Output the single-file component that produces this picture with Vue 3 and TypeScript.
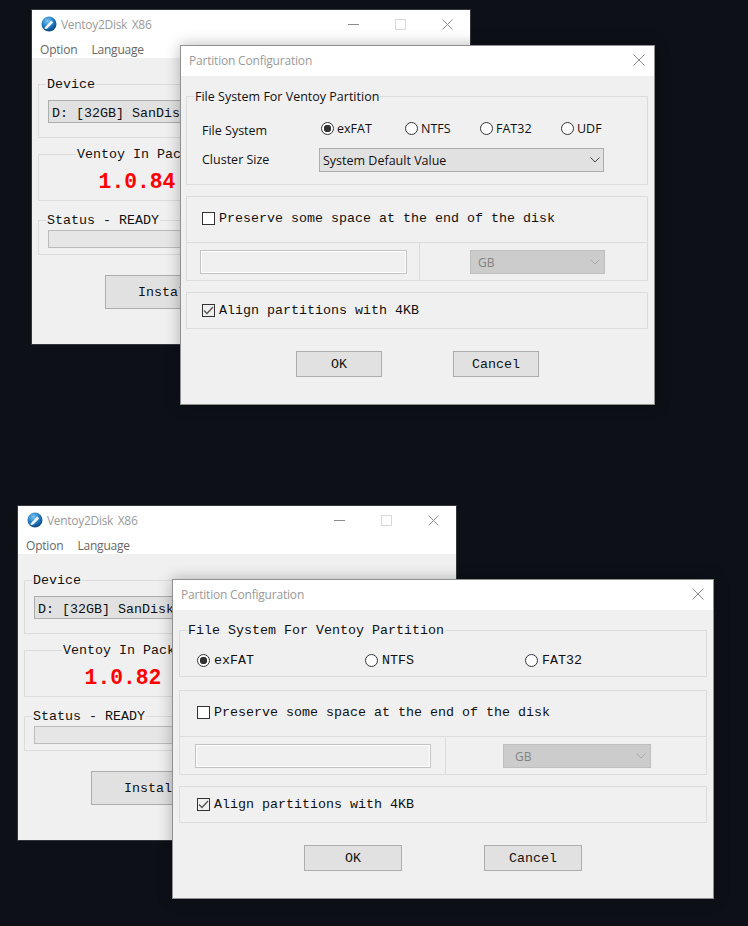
<script setup lang="ts">
interface Pair {
  id: string
  version: string
  device: string
}
const pairs: Pair[] = [
  { id: 'a', version: '1.0.84', device: 'D: [32GB] SanDisk' },
  { id: 'b', version: '1.0.82', device: 'D: [32GB] SanDisk' },
]
const radiosA = [
  { label: 'exFAT', on: true },
  { label: 'NTFS', on: false },
  { label: 'FAT32', on: false },
  { label: 'UDF', on: false },
]
const radiosB = radiosA.slice(0, 3)
</script>

<template>
  <div class="desktop">
    <template v-for="p in pairs" :key="p.id">
      <section class="win main" :class="p.id">
        <header class="titlebar">
          <svg class="logo" width="16" height="16" viewBox="0 0 16 16">
            <defs>
              <radialGradient :id="'g' + p.id" cx="40%" cy="30%" r="75%">
                <stop offset="0" stop-color="#7fc4ee" />
                <stop offset="0.55" stop-color="#1f7cc4" />
                <stop offset="1" stop-color="#0c3f78" />
              </radialGradient>
            </defs>
            <circle cx="8" cy="8" r="7.5" :fill="'url(#g' + p.id + ')'" />
            <path d="M4 11.2 10.2 4.6l2 1.8-6.2 6.4-2.4.2z" fill="#f4f7fa" />
          </svg>
          <span class="title main-title">Ventoy2Disk&nbsp; X86</span>
          <div class="controls">
            <svg width="11" height="11" viewBox="0 0 11 11"><path d="M0 5.5h11" stroke="#8c8c8c" /></svg>
            <svg width="11" height="11" viewBox="0 0 11 11"><rect x=".5" y=".5" width="10" height="10" fill="none" stroke="#d8d8d8" /></svg>
            <svg width="11" height="11" viewBox="0 0 11 11"><path d="M.5.5l10 10M10.5.5l-10 10" stroke="#8c8c8c" /></svg>
          </div>
        </header>
        <nav class="menu"><span>Option</span><span>Language</span></nav>
        <div class="body">
          <fieldset class="box device">
            <legend>Device</legend>
            <div class="combo">{{ p.device }}</div>
          </fieldset>
          <fieldset class="box pack">
            <legend>Ventoy In Pack</legend>
            <div class="version">{{ p.version }}</div>
          </fieldset>
          <fieldset class="box status">
            <legend>Status - READY</legend>
            <div class="progress"></div>
          </fieldset>
          <button class="btn install" type="button">Install</button>
        </div>
      </section>

      <section class="win dialog" :class="p.id">
        <header class="dlg-title">
          <span class="title">Partition Configuration</span>
          <svg width="12" height="12" viewBox="0 0 12 12"><path d="M.5.5l11 11M11.5.5l-11 11" stroke="#8a8a8a" /></svg>
        </header>
        <div class="dlg-body">
          <fieldset v-if="p.id === 'a'" class="box fs fs-a">
            <legend>File System For Ventoy Partition</legend>
            <div class="fs-grid">
              <span class="lbl lbl-fs">File System</span>
              <div class="radios">
                <label v-for="r in radiosA" :key="r.label" class="radio">
                  <i class="dot" :class="{ on: r.on }"></i>{{ r.label }}
                </label>
              </div>
              <span class="lbl">Cluster Size</span>
              <div class="select">
                <span>System Default Value</span>
                <svg width="10" height="6" viewBox="0 0 10 6"><path d="M.5.5 5 5 9.5.5" fill="none" stroke="#444" /></svg>
              </div>
            </div>
          </fieldset>
          <fieldset v-else class="box fs fs-b">
            <legend>File System For Ventoy Partition</legend>
            <div class="radios">
              <label v-for="r in radiosB" :key="r.label" class="radio">
                <i class="dot" :class="{ on: r.on }"></i>{{ r.label }}
              </label>
            </div>
          </fieldset>

          <div class="box reserve">
            <label class="check-row">
              <i class="check"></i>Preserve some space at the end of the disk
            </label>
            <div class="size-row">
              <div class="cell-input"><div class="input"></div></div>
              <div class="cell-unit">
                <div class="select off">
                  <span>GB</span>
                  <svg width="10" height="6" viewBox="0 0 10 6"><path d="M.5.5 5 5 9.5.5" fill="none" stroke="#a9a9a9" /></svg>
                </div>
              </div>
            </div>
          </div>

          <div class="box align">
            <label class="check-row">
              <i class="check checked">
                <svg width="11" height="11" viewBox="0 0 11 11"><path d="M1 5.5 4 8.5 10 2" fill="none" stroke="#555" stroke-width="1.3" /></svg>
              </i>Align partitions with 4KB
            </label>
          </div>

          <div class="actions">
            <button class="btn" type="button">OK</button>
            <button class="btn" type="button">Cancel</button>
          </div>
        </div>
      </section>
    </template>
  </div>
</template>

<style>
html, body { margin: 0; background: #0d1017; }
</style>

<style scoped>
* { box-sizing: border-box; }
.desktop {
  position: relative;
  width: 748px;
  height: 926px;
  overflow: hidden;
  background: #0d1017;
  font-family: "Liberation Mono", monospace;
  font-size: 13.33px;
  color: #111;
}
.win { position: absolute; background: #f0f0f0; }

/* main window */
.main { width: 440px; height: 336px; border: 1px solid #33363b; display: flex; flex-direction: column; }
.main.a { left: 31px; top: 9px; }
.main.b { left: 17px; top: 505px; }
.title { font-family: "Open Sans", sans-serif; font-size: 12px; color: #9a9a9a; letter-spacing: -.2px; }
.main-title { letter-spacing: -.3px; word-spacing: -.5px; }
.titlebar { height: 28px; background: #fff; display: flex; align-items: center; padding-left: 9px; }
.logo { margin-right: 4px; flex: none; }
.controls { margin-left: auto; display: flex; gap: 36px; padding-right: 17px; }
.menu {
  height: 20px;
  background: #fff;
  display: flex;
  gap: 14px;
  padding: 3px 0 0 8px;
  align-items: center;
  font-family: "Open Sans", sans-serif;
  font-size: 12px;
  letter-spacing: -.2px;
  color: #666;
}
.body { flex: 1; padding: 18px 6px 0; display: flex; flex-direction: column; }

.box { border: 1px solid #dcdcdc; margin: 0; padding: 0; min-width: 0; }
legend { padding: 0 1px; height: 16px; line-height: 18px; }

.device { padding: 8px 9px 14px; }
.device legend, .status legend { margin-left: -2px; }
.combo {
  height: 23px;
  line-height: 23px;
  padding: 1px 0 0 3px;
  background: #e1e1e1;
  border: 1px solid #adadad;
}
.pack { margin-top: 8px; width: 198px; padding: 8px 0 6px; }
.pack legend { margin-left: 37px; white-space: nowrap; }
.version {
  height: 24px;
  line-height: 24px;
  text-align: center;
  color: #f00;
  font-size: 21.33px;
  font-weight: 700;
}
.status { margin-top: 11px; padding: 2px 9px 6px; }
.progress { height: 18px; background: #e6e6e6; border: 1px solid #bcbcbc; }
.btn {
  background: #e1e1e1;
  border: 1px solid #adadad;
  font: inherit;
  color: inherit;
  padding: 0;
}
.install { width: 122px; height: 34px; margin: 20px 0 0 67px; }

/* dialog */
.dialog {
  border: 1px solid rgba(80, 80, 80, .6);
  box-shadow: 0 0 14px rgba(0, 0, 0, .28);
  display: flex;
  flex-direction: column;
}
.dialog.a { left: 180px; top: 45px; width: 475px; height: 360px; }
.dialog.b { left: 172px; top: 579px; width: 542px; height: 320px; }
.dlg-title {
  height: 30px;
  flex: none;
  background: #fff;
  display: flex;
  align-items: center;
  justify-content: space-between;
  padding: 0 9px 2px 8px;
}
.dlg-body { flex: 1; padding: 12px 6px 0 5px; background: #f0f0f0; display: flex; flex-direction: column; }
.dialog.b .dlg-body { padding-left: 6px; }

.fs-a { padding: 16px 0 12px 15px; font-family: "Open Sans", sans-serif; font-size: 12.5px; height: 97px; }
.fs-a legend { font-family: "Open Sans", sans-serif; margin-left: -8px; line-height: 17px; }
.fs-grid { display: grid; grid-template-columns: 117px 285px; row-gap: 12px; align-items: center; }
.lbl { line-height: 16px; }
.lbl-fs { position: relative; top: 3px; }
.radios { display: flex; }
.fs-a .radios { padding-left: 2px; }
.radio { display: flex; align-items: center; height: 16px; }
.fs-a .radio { gap: 3px; }
.fs-a .radio:nth-child(1) { width: 84px; }
.fs-a .radio:nth-child(2) { width: 75px; }
.fs-a .radio:nth-child(3) { width: 81px; }
.dot {
  width: 13px;
  height: 13px;
  border: 1px solid #333;
  border-radius: 50%;
  background: #fff;
  display: block;
  flex: none;
}
.dot.on { background: radial-gradient(circle, #333 0 3.5px, #fff 4px); }
.select {
  height: 24px;
  background: #e1e1e1;
  border: 1px solid #adadad;
  display: flex;
  align-items: center;
  justify-content: space-between;
  padding: 0 3px 0 3px;
}
.fs-b { height: 55px; padding: 14px 0 8px 17px; }
.fs-b legend { margin-left: -10px; }
.fs-b .radio { gap: 4px; }
.fs-b .radio:nth-child(1) { width: 168px; }
.fs-b .radio:nth-child(2) { width: 160px; }

.reserve { margin-top: 11px; }
.dialog.b .reserve { margin-top: 13px; }
.check-row { display: flex; align-items: center; gap: 4px; height: 45px; padding: 0 0 2px 15px; }
.dialog.b .check-row { padding-left: 17px; }
.check {
  width: 13px;
  height: 13px;
  flex: none;
  border: 1px solid #333;
  background: #fff;
  display: flex;
  align-items: center;
  justify-content: center;
}
.check.checked { background: #f0f0f0; }
.size-row { display: grid; border-top: 1px solid #dcdcdc; height: 38px; }
.dialog.a .size-row { grid-template-columns: 232px 1fr; }
.dialog.b .size-row { grid-template-columns: 265px 1fr; }
.cell-input { padding: 7px 0 0 13px; }
.dialog.b .cell-input { padding-left: 15px; }
.input {
  height: 24px;
  border: 1px solid #c4c4c4;
  box-shadow: inset 0 0 0 1px #fff;
  background: #f0f0f0;
}
.dialog.a .input { width: 207px; }
.dialog.b .input { width: 236px; }
.cell-unit { border-left: 1px solid #dcdcdc; padding: 7px 0 0 50px; }
.dialog.b .cell-unit { padding-left: 57px; }
.select.off {
  background: #cccccc;
  border-color: #bfbfbf;
  color: #838383;
  font-family: "Open Sans", sans-serif;
  font-size: 12px;
  padding-left: 7px;
  padding-right: 4px;
}
.dialog.a .select.off { width: 135px; }
.dialog.b .select.off { width: 148px; padding-left: 11px; }

.align { margin-top: 11px; }
.align .check-row { height: 35px; padding-bottom: 1px; }
.actions { display: flex; margin-top: 22px; }
.actions .btn { height: 26px; }
.dialog.a .actions { padding-left: 110px; gap: 71px; }
.dialog.a .actions .btn { width: 86px; }
.dialog.b .actions { padding-left: 125px; gap: 82px; }
.dialog.b .actions .btn { width: 98px; }
</style>
